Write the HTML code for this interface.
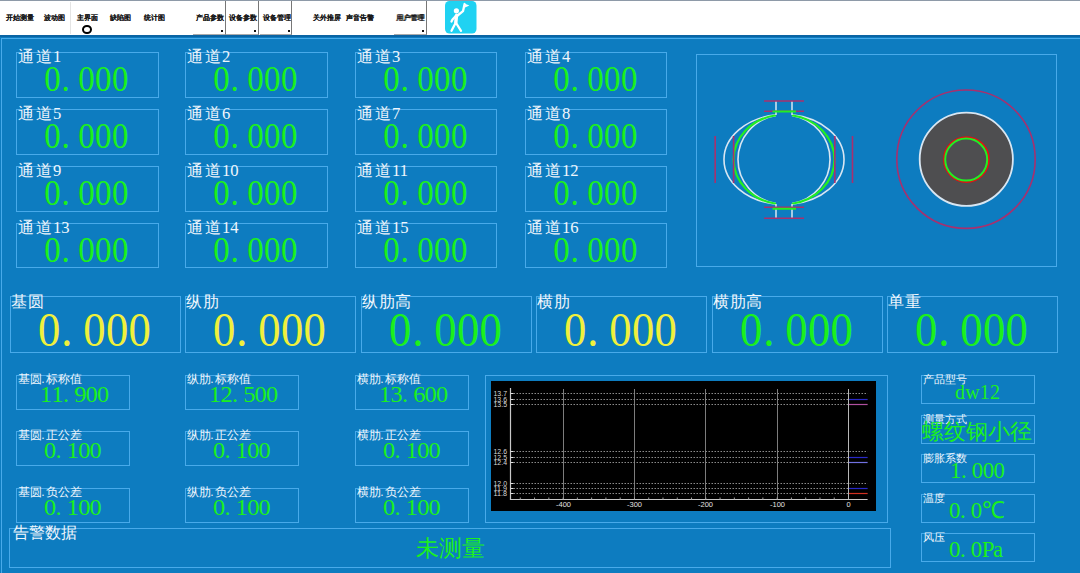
<!DOCTYPE html><html><head><meta charset="utf-8"><style>
html,body{margin:0;padding:0;width:1080px;height:573px;overflow:hidden;background:#0d7cc0;position:relative}
div{position:absolute;box-sizing:border-box}
.bx{border:1px solid #48aaea}
.lb{font-family:"Liberation Serif",serif;line-height:1;white-space:nowrap}
.nm{font-family:"Liberation Serif",serif;line-height:1;white-space:nowrap;transform-origin:0 0}
.nm i{font-style:normal;display:inline-block;text-align:center}
.dt{font-weight:normal;margin-right:1.5px;margin-left:-0.5px}
.tb{font-family:"Liberation Sans",sans-serif;font-weight:bold;font-size:6.5px;line-height:1;color:#151515;white-space:nowrap;text-shadow:0.2px 0.2px 0 #333}
</style></head><body>
<div style="left:0;top:0;width:1080px;height:35px;background:#fff"></div>
<div style="left:0;top:0;width:1080px;height:1px;background:#8e9aa8"></div>
<div style="left:0;top:35px;width:1080px;height:2px;background:#0a64a4"></div>
<div style="left:1px;top:38px;width:1080px;height:1px;background:#48aaea"></div>
<div style="left:1px;top:38px;width:1px;height:540px;background:#48aaea"></div>
<div class="tb" style="left:6px;top:14.6px">开始测量</div>
<div class="tb" style="left:43.5px;top:14.6px">波动图</div>
<div class="tb" style="left:77px;top:14.6px">主界面</div>
<div class="tb" style="left:110px;top:14.6px">缺陷图</div>
<div class="tb" style="left:143.5px;top:14.6px">统计图</div>
<div class="tb" style="left:195.6px;top:14.6px">产品参数</div>
<div class="tb" style="left:229px;top:14.6px">设备参数</div>
<div class="tb" style="left:262.7px;top:14.6px">设备管理</div>
<div class="tb" style="left:312.5px;top:14.6px">关外推屏</div>
<div class="tb" style="left:346.3px;top:14.6px">声音告警</div>
<div class="tb" style="left:396.4px;top:14.6px">用户管理</div>
<div style="left:70px;top:2px;width:1px;height:32px;background:#e4e4e4"></div>
<div style="left:82px;top:24.6px;width:10px;height:9.4px;border:2.8px solid #000;border-radius:50%"></div>
<div style="left:193px;top:1px;width:32.5px;height:33.5px;border-right:1px solid #777;border-bottom:1px solid #aaa"></div>
<div style="left:221.0px;top:30px;width:2px;height:2px;background:#111"></div>
<div style="left:226px;top:1px;width:32.5px;height:33.5px;border-right:1px solid #777;border-bottom:1px solid #aaa"></div>
<div style="left:254.0px;top:30px;width:2px;height:2px;background:#111"></div>
<div style="left:259.5px;top:1px;width:32.5px;height:33.5px;border-right:1px solid #777;border-bottom:1px solid #aaa"></div>
<div style="left:287.5px;top:30px;width:2px;height:2px;background:#111"></div>
<div style="left:394px;top:1px;width:32.5px;height:33.5px;border-right:1px solid #777;border-bottom:1px solid #aaa"></div>
<div style="left:422.0px;top:30px;width:2px;height:2px;background:#111"></div>
<svg style="position:absolute;left:445px;top:1.3px" width="32" height="33" viewBox="0 0 32 33">
<rect x="0" y="0" width="31.5" height="32.5" rx="4.5" fill="#20d2f2"/>
<circle cx="11.4" cy="9.8" r="2.6" fill="#fff"/>
<g fill="none" stroke="#fff" stroke-linecap="round" stroke-linejoin="round">
<path d="M11.5 14.5 L10.8 21.5" stroke-width="3.4"/>
<path d="M10.8 21.5 L6.5 29.8 M10.8 21.5 L16 29.8 M12 15 L18 10.2 L19.6 3 M11 14.8 L7.5 18.5 L6.5 20.5" stroke-width="2.3"/>
</g>
<path d="M19.4 2.6 L24.4 4.4 L20 6.6 Z" fill="#fff"/>
</svg>
<div class="bx" style="left:16px;top:52px;width:143px;height:46px;"></div>
<div class="lb" style="left:17.8px;top:49.4px;font-size:15.5px;color:#f0f6fc;"><span style="letter-spacing:1.9px">通道</span><span style="margin-left:-0.6px;font-size:16.6px">1</span></div>
<div class="nm" style="left:44.23px;top:62.26px;font-size:35.22px;color:#1cf01c;transform:scaleX(0.933)"><i style="width:18.17px">0</i><i style="width:18.17px;position:relative;left:-4.00px">.</i><i style="width:18.17px">0</i><i style="width:18.17px">0</i><i style="width:18.17px">0</i></div>
<div class="bx" style="left:185px;top:52px;width:143px;height:46px;"></div>
<div class="lb" style="left:186.8px;top:49.4px;font-size:15.5px;color:#f0f6fc;"><span style="letter-spacing:1.9px">通道</span><span style="margin-left:-0.6px;font-size:16.6px">2</span></div>
<div class="nm" style="left:213.23px;top:62.26px;font-size:35.22px;color:#1cf01c;transform:scaleX(0.933)"><i style="width:18.17px">0</i><i style="width:18.17px;position:relative;left:-4.00px">.</i><i style="width:18.17px">0</i><i style="width:18.17px">0</i><i style="width:18.17px">0</i></div>
<div class="bx" style="left:355px;top:52px;width:142px;height:46px;"></div>
<div class="lb" style="left:356.8px;top:49.4px;font-size:15.5px;color:#f0f6fc;"><span style="letter-spacing:1.9px">通道</span><span style="margin-left:-0.6px;font-size:16.6px">3</span></div>
<div class="nm" style="left:383.23px;top:62.26px;font-size:35.22px;color:#1cf01c;transform:scaleX(0.933)"><i style="width:18.17px">0</i><i style="width:18.17px;position:relative;left:-4.00px">.</i><i style="width:18.17px">0</i><i style="width:18.17px">0</i><i style="width:18.17px">0</i></div>
<div class="bx" style="left:525px;top:52px;width:142px;height:46px;"></div>
<div class="lb" style="left:526.8px;top:49.4px;font-size:15.5px;color:#f0f6fc;"><span style="letter-spacing:1.9px">通道</span><span style="margin-left:-0.6px;font-size:16.6px">4</span></div>
<div class="nm" style="left:553.22px;top:62.26px;font-size:35.22px;color:#1cf01c;transform:scaleX(0.933)"><i style="width:18.17px">0</i><i style="width:18.17px;position:relative;left:-4.00px">.</i><i style="width:18.17px">0</i><i style="width:18.17px">0</i><i style="width:18.17px">0</i></div>
<div class="bx" style="left:16px;top:109px;width:143px;height:46px;"></div>
<div class="lb" style="left:17.8px;top:106.4px;font-size:15.5px;color:#f0f6fc;"><span style="letter-spacing:1.9px">通道</span><span style="margin-left:-0.6px;font-size:16.6px">5</span></div>
<div class="nm" style="left:44.23px;top:119.26px;font-size:35.22px;color:#1cf01c;transform:scaleX(0.933)"><i style="width:18.17px">0</i><i style="width:18.17px;position:relative;left:-4.00px">.</i><i style="width:18.17px">0</i><i style="width:18.17px">0</i><i style="width:18.17px">0</i></div>
<div class="bx" style="left:185px;top:109px;width:143px;height:46px;"></div>
<div class="lb" style="left:186.8px;top:106.4px;font-size:15.5px;color:#f0f6fc;"><span style="letter-spacing:1.9px">通道</span><span style="margin-left:-0.6px;font-size:16.6px">6</span></div>
<div class="nm" style="left:213.23px;top:119.26px;font-size:35.22px;color:#1cf01c;transform:scaleX(0.933)"><i style="width:18.17px">0</i><i style="width:18.17px;position:relative;left:-4.00px">.</i><i style="width:18.17px">0</i><i style="width:18.17px">0</i><i style="width:18.17px">0</i></div>
<div class="bx" style="left:355px;top:109px;width:142px;height:46px;"></div>
<div class="lb" style="left:356.8px;top:106.4px;font-size:15.5px;color:#f0f6fc;"><span style="letter-spacing:1.9px">通道</span><span style="margin-left:-0.6px;font-size:16.6px">7</span></div>
<div class="nm" style="left:383.23px;top:119.26px;font-size:35.22px;color:#1cf01c;transform:scaleX(0.933)"><i style="width:18.17px">0</i><i style="width:18.17px;position:relative;left:-4.00px">.</i><i style="width:18.17px">0</i><i style="width:18.17px">0</i><i style="width:18.17px">0</i></div>
<div class="bx" style="left:525px;top:109px;width:142px;height:46px;"></div>
<div class="lb" style="left:526.8px;top:106.4px;font-size:15.5px;color:#f0f6fc;"><span style="letter-spacing:1.9px">通道</span><span style="margin-left:-0.6px;font-size:16.6px">8</span></div>
<div class="nm" style="left:553.22px;top:119.26px;font-size:35.22px;color:#1cf01c;transform:scaleX(0.933)"><i style="width:18.17px">0</i><i style="width:18.17px;position:relative;left:-4.00px">.</i><i style="width:18.17px">0</i><i style="width:18.17px">0</i><i style="width:18.17px">0</i></div>
<div class="bx" style="left:16px;top:166px;width:143px;height:46px;"></div>
<div class="lb" style="left:17.8px;top:163.4px;font-size:15.5px;color:#f0f6fc;"><span style="letter-spacing:1.9px">通道</span><span style="margin-left:-0.6px;font-size:16.6px">9</span></div>
<div class="nm" style="left:44.23px;top:176.26px;font-size:35.22px;color:#1cf01c;transform:scaleX(0.933)"><i style="width:18.17px">0</i><i style="width:18.17px;position:relative;left:-4.00px">.</i><i style="width:18.17px">0</i><i style="width:18.17px">0</i><i style="width:18.17px">0</i></div>
<div class="bx" style="left:185px;top:166px;width:143px;height:46px;"></div>
<div class="lb" style="left:186.8px;top:163.4px;font-size:15.5px;color:#f0f6fc;"><span style="letter-spacing:1.9px">通道</span><span style="margin-left:-0.6px;font-size:16.6px">10</span></div>
<div class="nm" style="left:213.23px;top:176.26px;font-size:35.22px;color:#1cf01c;transform:scaleX(0.933)"><i style="width:18.17px">0</i><i style="width:18.17px;position:relative;left:-4.00px">.</i><i style="width:18.17px">0</i><i style="width:18.17px">0</i><i style="width:18.17px">0</i></div>
<div class="bx" style="left:355px;top:166px;width:142px;height:46px;"></div>
<div class="lb" style="left:356.8px;top:163.4px;font-size:15.5px;color:#f0f6fc;"><span style="letter-spacing:1.9px">通道</span><span style="margin-left:-0.6px;font-size:16.6px">11</span></div>
<div class="nm" style="left:383.23px;top:176.26px;font-size:35.22px;color:#1cf01c;transform:scaleX(0.933)"><i style="width:18.17px">0</i><i style="width:18.17px;position:relative;left:-4.00px">.</i><i style="width:18.17px">0</i><i style="width:18.17px">0</i><i style="width:18.17px">0</i></div>
<div class="bx" style="left:525px;top:166px;width:142px;height:46px;"></div>
<div class="lb" style="left:526.8px;top:163.4px;font-size:15.5px;color:#f0f6fc;"><span style="letter-spacing:1.9px">通道</span><span style="margin-left:-0.6px;font-size:16.6px">12</span></div>
<div class="nm" style="left:553.22px;top:176.26px;font-size:35.22px;color:#1cf01c;transform:scaleX(0.933)"><i style="width:18.17px">0</i><i style="width:18.17px;position:relative;left:-4.00px">.</i><i style="width:18.17px">0</i><i style="width:18.17px">0</i><i style="width:18.17px">0</i></div>
<div class="bx" style="left:16px;top:223px;width:143px;height:45px;"></div>
<div class="lb" style="left:17.8px;top:220.0px;font-size:15.5px;color:#f0f6fc;"><span style="letter-spacing:1.9px">通道</span><span style="margin-left:-0.6px;font-size:16.6px">13</span></div>
<div class="nm" style="left:44.23px;top:232.86px;font-size:35.22px;color:#1cf01c;transform:scaleX(0.933)"><i style="width:18.17px">0</i><i style="width:18.17px;position:relative;left:-4.00px">.</i><i style="width:18.17px">0</i><i style="width:18.17px">0</i><i style="width:18.17px">0</i></div>
<div class="bx" style="left:185px;top:223px;width:143px;height:45px;"></div>
<div class="lb" style="left:186.8px;top:220.0px;font-size:15.5px;color:#f0f6fc;"><span style="letter-spacing:1.9px">通道</span><span style="margin-left:-0.6px;font-size:16.6px">14</span></div>
<div class="nm" style="left:213.23px;top:232.86px;font-size:35.22px;color:#1cf01c;transform:scaleX(0.933)"><i style="width:18.17px">0</i><i style="width:18.17px;position:relative;left:-4.00px">.</i><i style="width:18.17px">0</i><i style="width:18.17px">0</i><i style="width:18.17px">0</i></div>
<div class="bx" style="left:355px;top:223px;width:142px;height:45px;"></div>
<div class="lb" style="left:356.8px;top:220.0px;font-size:15.5px;color:#f0f6fc;"><span style="letter-spacing:1.9px">通道</span><span style="margin-left:-0.6px;font-size:16.6px">15</span></div>
<div class="nm" style="left:383.23px;top:232.86px;font-size:35.22px;color:#1cf01c;transform:scaleX(0.933)"><i style="width:18.17px">0</i><i style="width:18.17px;position:relative;left:-4.00px">.</i><i style="width:18.17px">0</i><i style="width:18.17px">0</i><i style="width:18.17px">0</i></div>
<div class="bx" style="left:525px;top:223px;width:142px;height:45px;"></div>
<div class="lb" style="left:526.8px;top:220.0px;font-size:15.5px;color:#f0f6fc;"><span style="letter-spacing:1.9px">通道</span><span style="margin-left:-0.6px;font-size:16.6px">16</span></div>
<div class="nm" style="left:553.22px;top:232.86px;font-size:35.22px;color:#1cf01c;transform:scaleX(0.933)"><i style="width:18.17px">0</i><i style="width:18.17px;position:relative;left:-4.00px">.</i><i style="width:18.17px">0</i><i style="width:18.17px">0</i><i style="width:18.17px">0</i></div>
<div class="bx" style="left:696px;top:54px;width:361px;height:213px;"></div>
<div class="bx" style="left:10px;top:296px;width:171px;height:57px;"></div>
<div class="lb" style="left:11.4px;top:293.9px;font-size:16.3px;color:#f0f6fc;"><span style="letter-spacing:0.4px">基圆</span></div>
<div class="nm" style="left:37.90px;top:305.75px;font-size:48.06px;color:#f0f03c;transform:scaleX(0.931)"><i style="width:24.27px">0</i><i style="width:24.27px;position:relative;left:-5.34px">.</i><i style="width:24.27px">0</i><i style="width:24.27px">0</i><i style="width:24.27px">0</i></div>
<div class="bx" style="left:185px;top:296px;width:171px;height:57px;"></div>
<div class="lb" style="left:186.4px;top:293.9px;font-size:16.3px;color:#f0f6fc;"><span style="letter-spacing:0.4px">纵肋</span></div>
<div class="nm" style="left:212.90px;top:305.75px;font-size:48.06px;color:#f0f03c;transform:scaleX(0.931)"><i style="width:24.27px">0</i><i style="width:24.27px;position:relative;left:-5.34px">.</i><i style="width:24.27px">0</i><i style="width:24.27px">0</i><i style="width:24.27px">0</i></div>
<div class="bx" style="left:361px;top:296px;width:171px;height:57px;"></div>
<div class="lb" style="left:362.4px;top:293.9px;font-size:16.3px;color:#f0f6fc;"><span style="letter-spacing:0.4px">纵肋高</span></div>
<div class="nm" style="left:388.90px;top:305.75px;font-size:48.06px;color:#1cf01c;transform:scaleX(0.931)"><i style="width:24.27px">0</i><i style="width:24.27px;position:relative;left:-5.34px">.</i><i style="width:24.27px">0</i><i style="width:24.27px">0</i><i style="width:24.27px">0</i></div>
<div class="bx" style="left:536px;top:296px;width:171px;height:57px;"></div>
<div class="lb" style="left:537.4px;top:293.9px;font-size:16.3px;color:#f0f6fc;"><span style="letter-spacing:0.4px">横肋</span></div>
<div class="nm" style="left:563.90px;top:305.75px;font-size:48.06px;color:#f0f03c;transform:scaleX(0.931)"><i style="width:24.27px">0</i><i style="width:24.27px;position:relative;left:-5.34px">.</i><i style="width:24.27px">0</i><i style="width:24.27px">0</i><i style="width:24.27px">0</i></div>
<div class="bx" style="left:712px;top:296px;width:171px;height:57px;"></div>
<div class="lb" style="left:713.4px;top:293.9px;font-size:16.3px;color:#f0f6fc;"><span style="letter-spacing:0.4px">横肋高</span></div>
<div class="nm" style="left:739.90px;top:305.75px;font-size:48.06px;color:#1cf01c;transform:scaleX(0.931)"><i style="width:24.27px">0</i><i style="width:24.27px;position:relative;left:-5.34px">.</i><i style="width:24.27px">0</i><i style="width:24.27px">0</i><i style="width:24.27px">0</i></div>
<div class="bx" style="left:887px;top:296px;width:171px;height:57px;"></div>
<div class="lb" style="left:888.4px;top:293.9px;font-size:16.3px;color:#f0f6fc;"><span style="letter-spacing:0.4px">单重</span></div>
<div class="nm" style="left:914.90px;top:305.75px;font-size:48.06px;color:#1cf01c;transform:scaleX(0.931)"><i style="width:24.27px">0</i><i style="width:24.27px;position:relative;left:-5.34px">.</i><i style="width:24.27px">0</i><i style="width:24.27px">0</i><i style="width:24.27px">0</i></div>
<div class="bx" style="left:16px;top:375px;width:114px;height:35px;"></div>
<div class="lb" style="left:17.9px;top:374.2px;font-size:11.5px;color:#f0f6fc;"><span style="letter-spacing:0px">基圆</span><span style="margin-left:0px;font-size:11.5px"><b class="dt">.</b></span><span style="letter-spacing:0px">标称值</span></div>
<div class="nm" style="left:40.00px;top:383.11px;font-size:23.28px;color:#1cf01c;transform:scaleX(1.043)"><i style="width:10.93px">1</i><i style="width:10.93px">1</i><i style="width:10.93px;position:relative;left:-2.40px">.</i><i style="width:10.93px">9</i><i style="width:10.93px">0</i><i style="width:10.93px">0</i></div>
<div class="bx" style="left:185px;top:375px;width:114px;height:35px;"></div>
<div class="lb" style="left:186.9px;top:374.2px;font-size:11.5px;color:#f0f6fc;"><span style="letter-spacing:0px">纵肋</span><span style="margin-left:0px;font-size:11.5px"><b class="dt">.</b></span><span style="letter-spacing:0px">标称值</span></div>
<div class="nm" style="left:209.00px;top:383.11px;font-size:23.28px;color:#1cf01c;transform:scaleX(1.043)"><i style="width:10.93px">1</i><i style="width:10.93px">2</i><i style="width:10.93px;position:relative;left:-2.40px">.</i><i style="width:10.93px">5</i><i style="width:10.93px">0</i><i style="width:10.93px">0</i></div>
<div class="bx" style="left:355px;top:375px;width:114px;height:35px;"></div>
<div class="lb" style="left:356.9px;top:374.2px;font-size:11.5px;color:#f0f6fc;"><span style="letter-spacing:0px">横肋</span><span style="margin-left:0px;font-size:11.5px"><b class="dt">.</b></span><span style="letter-spacing:0px">标称值</span></div>
<div class="nm" style="left:379.00px;top:383.11px;font-size:23.28px;color:#1cf01c;transform:scaleX(1.043)"><i style="width:10.93px">1</i><i style="width:10.93px">3</i><i style="width:10.93px;position:relative;left:-2.40px">.</i><i style="width:10.93px">6</i><i style="width:10.93px">0</i><i style="width:10.93px">0</i></div>
<div class="bx" style="left:16px;top:431px;width:114px;height:35px;"></div>
<div class="lb" style="left:17.9px;top:430.2px;font-size:11.5px;color:#f0f6fc;"><span style="letter-spacing:0px">基圆</span><span style="margin-left:0px;font-size:11.5px"><b class="dt">.</b></span><span style="letter-spacing:0px">正公差</span></div>
<div class="nm" style="left:44.40px;top:439.11px;font-size:23.28px;color:#1cf01c;transform:scaleX(1.043)"><i style="width:10.93px">0</i><i style="width:10.93px;position:relative;left:-2.40px">.</i><i style="width:10.93px">1</i><i style="width:10.93px">0</i><i style="width:10.93px">0</i></div>
<div class="bx" style="left:185px;top:431px;width:114px;height:35px;"></div>
<div class="lb" style="left:186.9px;top:430.2px;font-size:11.5px;color:#f0f6fc;"><span style="letter-spacing:0px">纵肋</span><span style="margin-left:0px;font-size:11.5px"><b class="dt">.</b></span><span style="letter-spacing:0px">正公差</span></div>
<div class="nm" style="left:213.40px;top:439.11px;font-size:23.28px;color:#1cf01c;transform:scaleX(1.043)"><i style="width:10.93px">0</i><i style="width:10.93px;position:relative;left:-2.40px">.</i><i style="width:10.93px">1</i><i style="width:10.93px">0</i><i style="width:10.93px">0</i></div>
<div class="bx" style="left:355px;top:431px;width:114px;height:35px;"></div>
<div class="lb" style="left:356.9px;top:430.2px;font-size:11.5px;color:#f0f6fc;"><span style="letter-spacing:0px">横肋</span><span style="margin-left:0px;font-size:11.5px"><b class="dt">.</b></span><span style="letter-spacing:0px">正公差</span></div>
<div class="nm" style="left:383.40px;top:439.11px;font-size:23.28px;color:#1cf01c;transform:scaleX(1.043)"><i style="width:10.93px">0</i><i style="width:10.93px;position:relative;left:-2.40px">.</i><i style="width:10.93px">1</i><i style="width:10.93px">0</i><i style="width:10.93px">0</i></div>
<div class="bx" style="left:16px;top:488px;width:114px;height:35px;"></div>
<div class="lb" style="left:17.9px;top:487.2px;font-size:11.5px;color:#f0f6fc;"><span style="letter-spacing:0px">基圆</span><span style="margin-left:0px;font-size:11.5px"><b class="dt">.</b></span><span style="letter-spacing:0px">负公差</span></div>
<div class="nm" style="left:44.40px;top:496.11px;font-size:23.28px;color:#1cf01c;transform:scaleX(1.043)"><i style="width:10.93px">0</i><i style="width:10.93px;position:relative;left:-2.40px">.</i><i style="width:10.93px">1</i><i style="width:10.93px">0</i><i style="width:10.93px">0</i></div>
<div class="bx" style="left:185px;top:488px;width:114px;height:35px;"></div>
<div class="lb" style="left:186.9px;top:487.2px;font-size:11.5px;color:#f0f6fc;"><span style="letter-spacing:0px">纵肋</span><span style="margin-left:0px;font-size:11.5px"><b class="dt">.</b></span><span style="letter-spacing:0px">负公差</span></div>
<div class="nm" style="left:213.40px;top:496.11px;font-size:23.28px;color:#1cf01c;transform:scaleX(1.043)"><i style="width:10.93px">0</i><i style="width:10.93px;position:relative;left:-2.40px">.</i><i style="width:10.93px">1</i><i style="width:10.93px">0</i><i style="width:10.93px">0</i></div>
<div class="bx" style="left:355px;top:488px;width:114px;height:35px;"></div>
<div class="lb" style="left:356.9px;top:487.2px;font-size:11.5px;color:#f0f6fc;"><span style="letter-spacing:0px">横肋</span><span style="margin-left:0px;font-size:11.5px"><b class="dt">.</b></span><span style="letter-spacing:0px">负公差</span></div>
<div class="nm" style="left:383.40px;top:496.11px;font-size:23.28px;color:#1cf01c;transform:scaleX(1.043)"><i style="width:10.93px">0</i><i style="width:10.93px;position:relative;left:-2.40px">.</i><i style="width:10.93px">1</i><i style="width:10.93px">0</i><i style="width:10.93px">0</i></div>
<div class="bx" style="left:485px;top:375px;width:403px;height:148px;"></div>
<div style="left:491px;top:381px;width:384.5px;height:129.5px;background:#000"></div>
<div class="bx" style="left:921px;top:375px;width:114px;height:29px;"></div>
<div class="lb" style="left:922.6px;top:373.9px;font-size:11.2px;color:#f0f6fc;"><span style="letter-spacing:0px">产品型号</span></div>
<div class="bx" style="left:921px;top:415px;width:114px;height:29px;"></div>
<div class="lb" style="left:922.6px;top:413.9px;font-size:11.2px;color:#f0f6fc;"><span style="letter-spacing:0px">测量方式</span></div>
<div class="bx" style="left:921px;top:454px;width:114px;height:29px;"></div>
<div class="lb" style="left:922.6px;top:452.9px;font-size:11.2px;color:#f0f6fc;"><span style="letter-spacing:0px">膨胀系数</span></div>
<div class="bx" style="left:921px;top:494px;width:114px;height:29px;"></div>
<div class="lb" style="left:922.6px;top:492.9px;font-size:11.2px;color:#f0f6fc;"><span style="letter-spacing:0px">温度</span></div>
<div class="bx" style="left:921px;top:533px;width:114px;height:29px;"></div>
<div class="lb" style="left:922.6px;top:531.9px;font-size:11.2px;color:#f0f6fc;"><span style="letter-spacing:0px">风压</span></div>
<div class="bx" style="left:9px;top:528px;width:882px;height:40px;"></div>
<div class="lb" style="left:12.6px;top:525.2px;font-size:16.1px;color:#f0f6fc;"><span style="letter-spacing:0.2px">告警数据</span></div>
<div class="lb" style="left:415.6px;top:538.0px;font-size:22.6px;color:#1cf01c;"><span style="letter-spacing:0px">未测量</span></div>
<svg style="position:absolute;left:0;top:0" width="1080" height="573" viewBox="0 0 1080 573">
<path d="M776 114.90 A60 45 0 0 0 776 204.10 M792 114.90 A60 45 0 0 1 792 204.10" fill="none" stroke="#d8e6f2" stroke-width="1.6"/>
<path d="M776 115.38 A46 44.8 0 0 0 776 203.62 M792 115.38 A46 44.8 0 0 1 792 203.62" fill="none" stroke="#d8e6f2" stroke-width="1.6"/>
<path d="M776 115.27 A50.5 44.8 0 0 0 776 203.73 M792 115.27 A50.5 44.8 0 0 1 792 203.73" fill="none" stroke="#22ee22" stroke-width="2.2"/>
<path d="M776 101 V115 M792 101 V115 M776 204 V218.5 M792 204 V218.5" stroke="#d8e6f2" stroke-width="1.5"/>
<path d="M764 101 H804 M764 111.2 H804 M764 207.2 H804 M764 218.3 H804" stroke="#a8306e" stroke-width="1.6"/>
<path d="M772.5 111.5 H796 M772.5 208.8 H796" stroke="#22ee22" stroke-width="2"/>
<path d="M715.2 136 V183 M733.6 136 V183 M834.8 136 V183 M852.5 136 V183" stroke="#a8306e" stroke-width="1.6"/>
<circle cx="966" cy="159.2" r="69.2" fill="none" stroke="#a8306e" stroke-width="1.6"/>
<circle cx="966.3" cy="159.3" r="46.6" fill="#4e4e50" stroke="#d8e6f2" stroke-width="1.8"/>
<circle cx="966.4" cy="159.6" r="22.6" fill="none" stroke="#e81010" stroke-width="1.5"/>
<circle cx="966.2" cy="159.6" r="21" fill="none" stroke="#22ee22" stroke-width="2"/>
<path d="M563.5 389 V499" stroke="#7c7c7c" stroke-width="1"/>
<path d="M634.5 389 V499" stroke="#7c7c7c" stroke-width="1"/>
<path d="M705.5 389 V499" stroke="#7c7c7c" stroke-width="1"/>
<path d="M777.5 389 V499" stroke="#7c7c7c" stroke-width="1"/>
<path d="M848.5 389 V499" stroke="#b8b8b8" stroke-width="1"/>
<path d="M510.5 393.5 H867.6" stroke="#8a8a8a" stroke-width="1" stroke-dasharray="1.5 1.5"/>
<path d="M510.5 399.5 H867.6" stroke="#8a8a8a" stroke-width="1" stroke-dasharray="1.5 1.5"/>
<path d="M510.5 404.5 H867.6" stroke="#8a8a8a" stroke-width="1" stroke-dasharray="1.5 1.5"/>
<path d="M510.5 451.5 H867.6" stroke="#8a8a8a" stroke-width="1" stroke-dasharray="1.5 1.5"/>
<path d="M510.5 457.5 H867.6" stroke="#8a8a8a" stroke-width="1" stroke-dasharray="1.5 1.5"/>
<path d="M510.5 462.5 H867.6" stroke="#8a8a8a" stroke-width="1" stroke-dasharray="1.5 1.5"/>
<path d="M510.5 483.5 H867.6" stroke="#8a8a8a" stroke-width="1" stroke-dasharray="1.5 1.5"/>
<path d="M510.5 488.5 H867.6" stroke="#8a8a8a" stroke-width="1" stroke-dasharray="1.5 1.5"/>
<path d="M510.5 493.5 H867.6" stroke="#8a8a8a" stroke-width="1" stroke-dasharray="1.5 1.5"/>
<path d="M510.5 388 V499.5 H867.6" fill="none" stroke="#c8c8c8" stroke-width="1.2"/>
<path d="M834.23 497.5 V499.5 M819.96 497.5 V499.5 M805.69 497.5 V499.5 M791.42 497.5 V499.5 M777.15 497.5 V499.5 M762.88 497.5 V499.5 M748.61 497.5 V499.5 M734.34 497.5 V499.5 M720.07 497.5 V499.5 M705.80 497.5 V499.5 M691.53 497.5 V499.5 M677.26 497.5 V499.5 M662.99 497.5 V499.5 M648.72 497.5 V499.5 M634.45 497.5 V499.5 M620.18 497.5 V499.5 M605.91 497.5 V499.5 M591.64 497.5 V499.5 M577.37 497.5 V499.5 M563.10 497.5 V499.5 M548.83 497.5 V499.5 M534.56 497.5 V499.5 M520.29 497.5 V499.5 " stroke="#a0a0a0" stroke-width="1"/>
<path d="M510.5 393.5 H513.5 M510.5 399.5 H513.5 M510.5 404.5 H513.5 M510.5 451.5 H513.5 M510.5 457.5 H513.5 M510.5 462.5 H513.5 M510.5 483.5 H513.5 M510.5 488.5 H513.5 M510.5 493.5 H513.5 " stroke="#e0e0e0" stroke-width="1.2"/>
<text x="493.5" y="396.0" textLength="13.5" lengthAdjust="spacingAndGlyphs" font-family="Liberation Sans" font-size="7" fill="#d8d8d8">13.7</text>
<text x="493.5" y="402.0" textLength="13.5" lengthAdjust="spacingAndGlyphs" font-family="Liberation Sans" font-size="7" fill="#d8d8d8">13.6</text>
<text x="493.5" y="407.0" textLength="13.5" lengthAdjust="spacingAndGlyphs" font-family="Liberation Sans" font-size="7" fill="#d8d8d8">13.5</text>
<text x="493.5" y="454.0" textLength="13.5" lengthAdjust="spacingAndGlyphs" font-family="Liberation Sans" font-size="7" fill="#d8d8d8">12.6</text>
<text x="493.5" y="460.0" textLength="13.5" lengthAdjust="spacingAndGlyphs" font-family="Liberation Sans" font-size="7" fill="#d8d8d8">12.5</text>
<text x="493.5" y="465.0" textLength="13.5" lengthAdjust="spacingAndGlyphs" font-family="Liberation Sans" font-size="7" fill="#d8d8d8">12.4</text>
<text x="493.5" y="486.0" textLength="13.5" lengthAdjust="spacingAndGlyphs" font-family="Liberation Sans" font-size="7" fill="#d8d8d8">12.0</text>
<text x="493.5" y="491.0" textLength="13.5" lengthAdjust="spacingAndGlyphs" font-family="Liberation Sans" font-size="7" fill="#d8d8d8">11.9</text>
<text x="493.5" y="496.0" textLength="13.5" lengthAdjust="spacingAndGlyphs" font-family="Liberation Sans" font-size="7" fill="#d8d8d8">11.8</text>
<text x="563.5" y="507" text-anchor="middle" font-family="Liberation Sans" font-size="7.5" fill="#e0e0e0">-400</text>
<text x="634.5" y="507" text-anchor="middle" font-family="Liberation Sans" font-size="7.5" fill="#e0e0e0">-300</text>
<text x="705.5" y="507" text-anchor="middle" font-family="Liberation Sans" font-size="7.5" fill="#e0e0e0">-200</text>
<text x="777.5" y="507" text-anchor="middle" font-family="Liberation Sans" font-size="7.5" fill="#e0e0e0">-100</text>
<text x="848.5" y="507" text-anchor="middle" font-family="Liberation Sans" font-size="7.5" fill="#e0e0e0">0</text>
<path d="M849 399.5 H867.6" stroke="#2828c8" stroke-width="1.2"/>
<path d="M849 404.5 H867.6" stroke="#b050a0" stroke-width="1.2"/>
<path d="M849 457.5 H867.6" stroke="#2828c8" stroke-width="1.2"/>
<path d="M849 462.5 H867.6" stroke="#7070e0" stroke-width="1.2"/>
<path d="M849 488.5 H867.6" stroke="#2828c8" stroke-width="1.2"/>
<path d="M849 493.5 H867.6" stroke="#d03020" stroke-width="1.2"/>
</svg>
<div class="lb" style="left:954.6px;top:382px;font-size:21.5px;color:#1cf01c;letter-spacing:0.2px;transform:scaleX(0.93);transform-origin:0 0">dw12</div>
<div class="lb" style="left:921.5px;top:420.5px;font-size:22px;color:#1cf01c;"><span style="letter-spacing:0px">螺纹钢小径</span></div>
<div class="nm" style="left:950.25px;top:459.16px;font-size:23.58px;color:#1cf01c;transform:scaleX(0.969)"><i style="width:11.25px">1</i><i style="width:11.25px;position:relative;left:-2.47px">.</i><i style="width:11.25px">0</i><i style="width:11.25px">0</i><i style="width:11.25px">0</i></div>
<div class="nm" style="left:948.85px;top:498.66px;font-size:23.58px;color:#1cf01c;transform:scaleX(0.969)"><i style="width:11.25px">0</i><i style="width:11.25px;position:relative;left:-2.47px">.</i><i style="width:11.25px">0</i><i style="width:11.25px">℃</i></div>
<div class="nm" style="left:948.85px;top:538.36px;font-size:23.58px;color:#1cf01c;transform:scaleX(0.969)"><i style="width:11.25px">0</i><i style="width:11.25px;position:relative;left:-2.47px">.</i><i style="width:11.25px">0</i><i style="width:11.25px">P</i><i style="width:11.25px">a</i></div>
</body></html>
